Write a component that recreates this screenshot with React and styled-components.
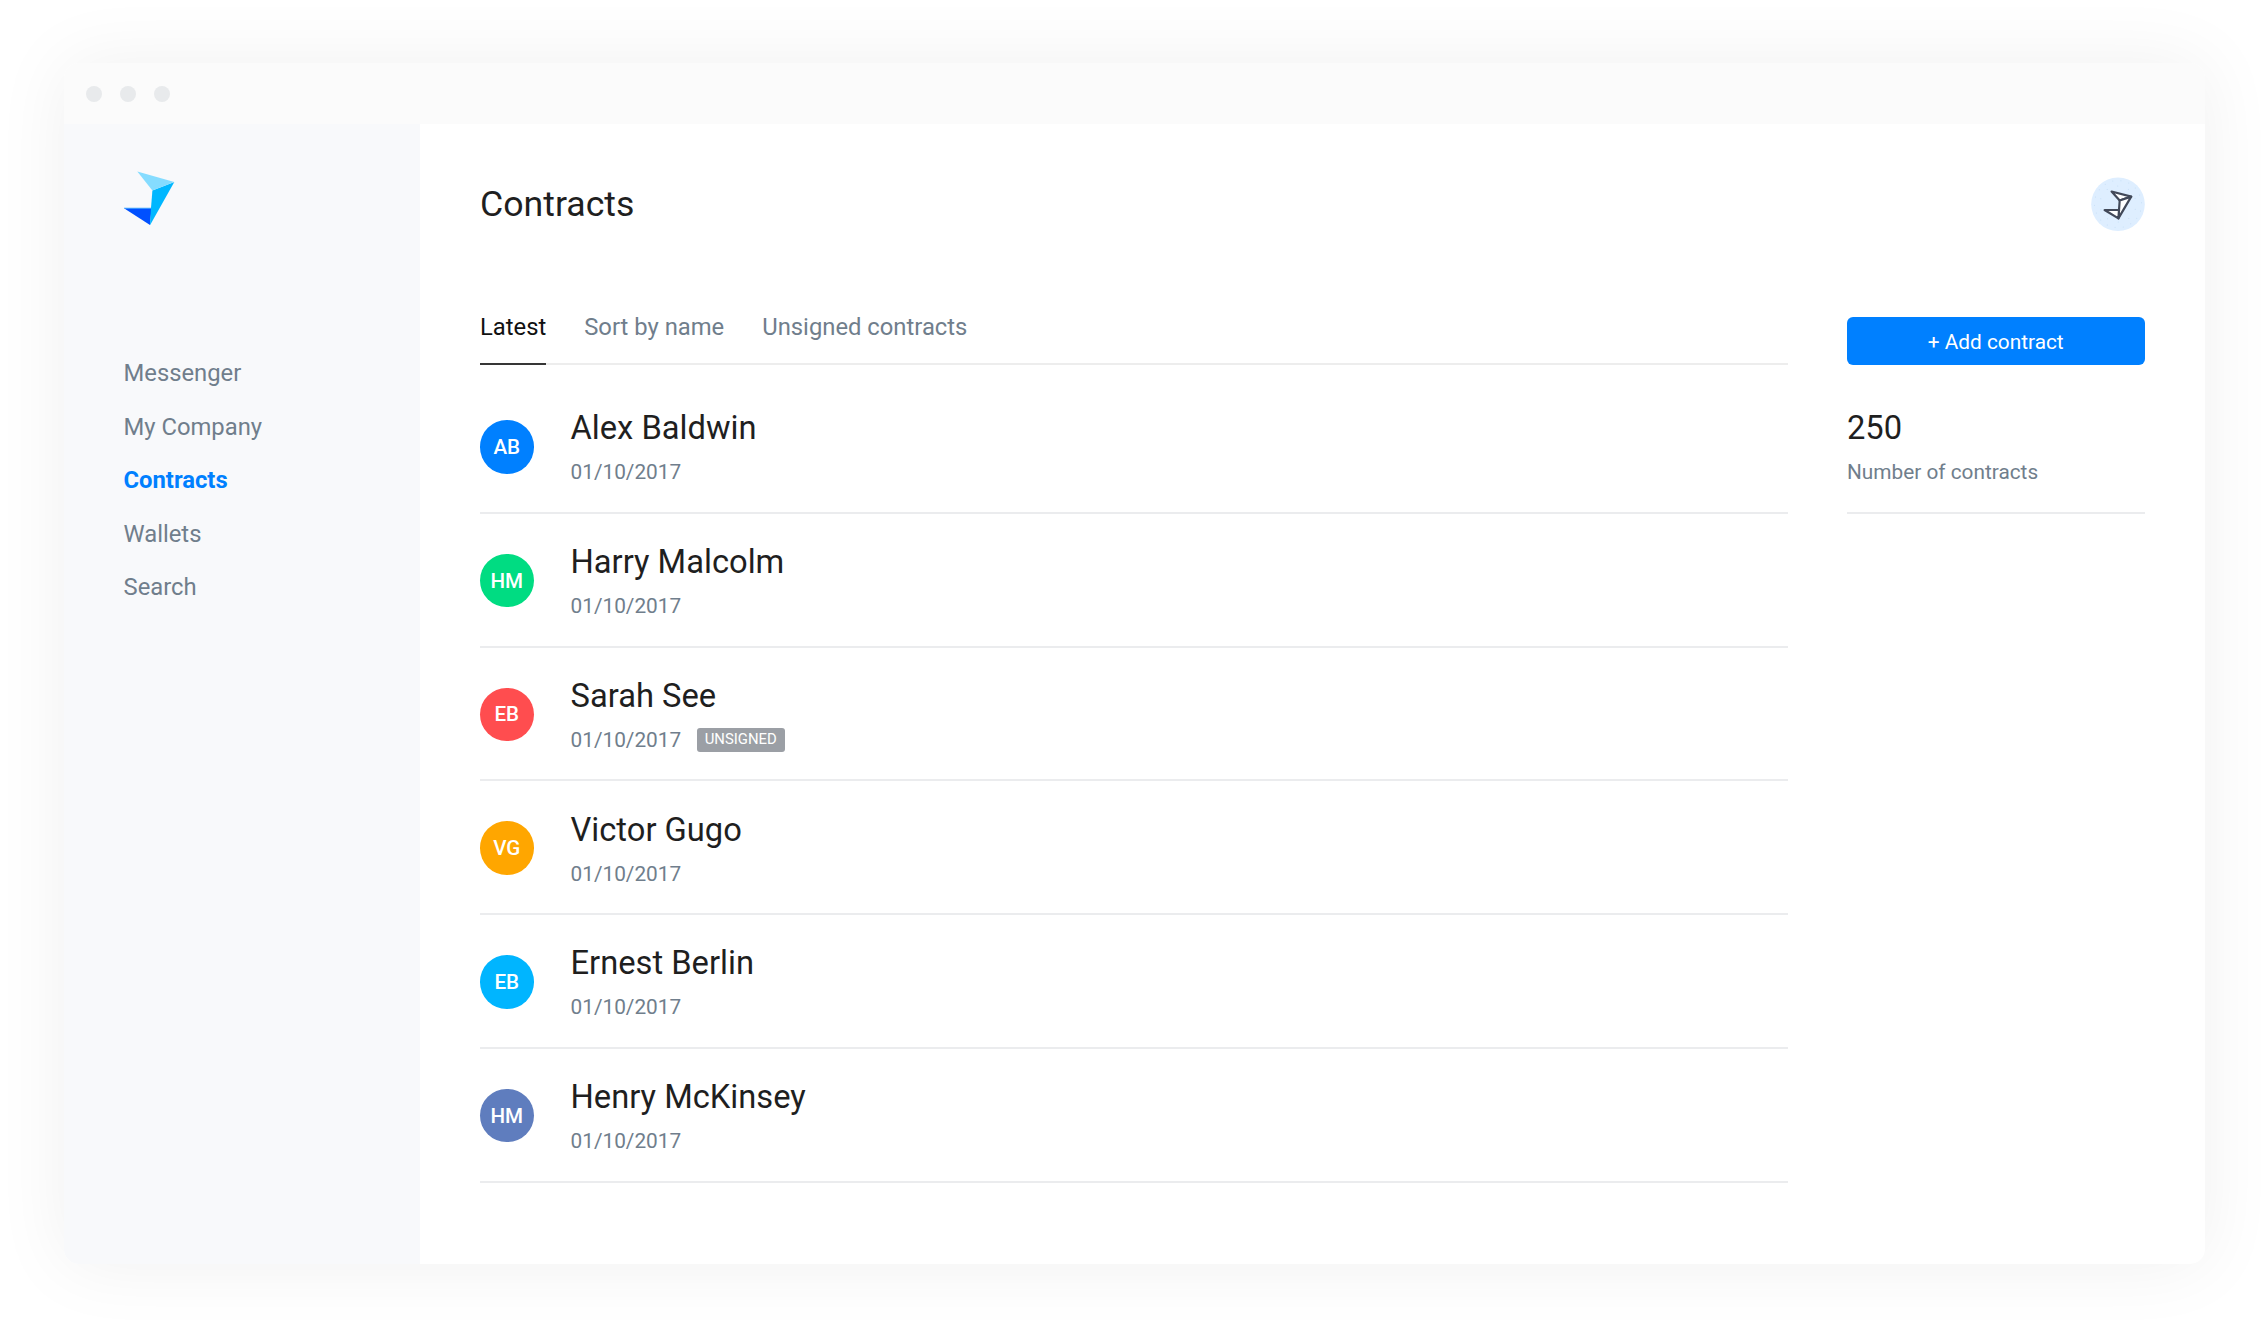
import React from "react";
import styled, { createGlobalStyle } from "styled-components";

const GlobalStyle = createGlobalStyle`
  *, *::before, *::after { box-sizing: border-box; }
  body {
    margin: 0;
    background: #ffffff;
    color: #1f1f1f;
    font-family: Roboto, "Liberation Sans", sans-serif;
    overflow: hidden;
  }
`;

const Stage = styled.div`
  height: 1328px;
  padding: 63px 63.5px 64px 63.5px;
`;

const Window = styled.div`
  display: flex;
  flex-direction: column;
  height: 1201px;
  border-radius: 15px;
  overflow: hidden;
  background: #ffffff;
  box-shadow: 0 0 74px rgba(0, 0, 0, 0.063);
`;

const TitleBar = styled.div`
  display: flex;
  align-items: center;
  gap: 18px;
  flex: 0 0 61px;
  padding-left: 22.5px;
  background: #fbfbfb;
`;

const WindowDot = styled.span`
  width: 16px;
  height: 16px;
  border-radius: 50%;
  background: #e8eaec;
`;

const Body = styled.div`
  display: flex;
  flex: 1;
`;

const Sidebar = styled.aside`
  flex: 0 0 356.5px;
  padding: 47px 0 0 60px;
  background: #f8f9fb;
`;

const Logo = styled.svg`
  display: block;
  width: 52px;
  height: 56px;
  margin-bottom: 120.3px;
`;

const Nav = styled.nav`
  display: flex;
  flex-direction: column;
  align-items: flex-start;
`;

const NavItem = styled.a`
  height: 53.5px;
  line-height: 53.5px;
  font-size: 23.8px;
  font-weight: ${(p) => (p.$active ? 700 : 400)};
  color: ${(p) => (p.$active ? "#0080ff" : "#707e8c")};
`;

const Main = styled.main`
  flex: 1;
  padding: 53px 60px 0;
`;

const Header = styled.header`
  display: flex;
  align-items: center;
  justify-content: space-between;
  height: 54px;
  margin-bottom: 86px;
`;

const Title = styled.h1`
  margin: 0;
  font-size: 35.67px;
  line-height: 54px;
  font-weight: 400;
`;

const Columns = styled.div`
  display: grid;
  grid-template-columns: 1308px 297.5px;
  justify-content: space-between;
`;

const Tabs = styled.div`
  display: flex;
  align-items: flex-start;
  gap: 38px;
  height: 71px;
  margin-top: -23px;
  box-shadow: inset 0 -2px 0 #ededed;
`;

const Tab = styled.a`
  height: 71px;
  line-height: 67px;
  font-size: 23.8px;
  color: ${(p) => (p.$active ? "#111111" : "#707e8c")};
  box-shadow: ${(p) => (p.$active ? "inset 0 -2px 0 #363636" : "none")};
`;

const List = styled.div`
  padding-top: 15px;
`;

const Row = styled.div`
  display: flex;
  align-items: center;
  gap: 37px;
  height: 133.78px;
  padding-top: 2px;
  border-bottom: 2px solid #ebecee;
`;

const Initials = styled.div`
  display: flex;
  align-items: center;
  justify-content: center;
  width: 53.5px;
  height: 53.5px;
  border-radius: 50%;
  background: ${(p) => p.$color};
  color: #ffffff;
  font-size: 20.6px;
  font-weight: 500;
`;

const Details = styled.div`
  padding-top: 7px;
`;

const Name = styled.div`
  font-size: 32.7px;
  line-height: 44px;
  color: #1f1f1f;
`;

const Meta = styled.div`
  display: flex;
  align-items: center;
  gap: 15.5px;
  height: 44px;
  line-height: 44px;
  font-size: 20.8px;
  color: #707e8c;
`;

const Badge = styled.span`
  height: 24px;
  padding: 0 8px;
  border-radius: 3px;
  background: #9b9fa5;
  color: #ffffff;
  font-size: 14.87px;
  line-height: 23px;
`;

const Side = styled.aside`
  display: flex;
  flex-direction: column;
`;

const AddButton = styled.button`
  height: 48px;
  border: 0;
  border-radius: 6px;
  background: #0080ff;
  color: #ffffff;
  font: 400 20.8px/46px Roboto, "Liberation Sans", sans-serif;
  padding: 2px 0 0;
`;

const Stat = styled(Row)`
  margin-top: 15px;
`;

const Profile = styled.svg`
  display: block;
  width: 54px;
  height: 54px;
`;

const navItems = ["Messenger", "My Company", "Contracts", "Wallets", "Search"];

const contracts = [
  { initials: "AB", name: "Alex Baldwin", color: "#0080ff" },
  { initials: "HM", name: "Harry Malcolm", color: "#00dc82" },
  { initials: "EB", name: "Sarah See", color: "#ff4d4f", unsigned: true },
  { initials: "VG", name: "Victor Gugo", color: "#ffa600" },
  { initials: "EB", name: "Ernest Berlin", color: "#00b5ff" },
  { initials: "HM", name: "Henry McKinsey", color: "#5f7dbe" },
];

function BrandLogo() {
  return (
    <Logo viewBox="0 0 52 56">
      <path d="M0 37.2H27.5L26 54Z" fill="#0050ff" />
      <path d="M0 37.2H27.5" stroke="#35a8ff" strokeWidth="0.8" />
      <path d="M50.3 11L28.4 19.5L27 37L26 54.3Z" fill="#00b7ff" />
      <path d="M13.3 0.6L50.3 11L28.4 19.6Z" fill="#85dcff" />
    </Logo>
  );
}

function ProfileIcon() {
  const dots = [];
  [[18, 10], [23.5, 18]].forEach(([radius, count]) => {
    for (let i = 0; i < count; i += 1) {
      const angle = (i / count) * Math.PI * 2 + 0.3;
      dots.push(
        <circle
          key={`${radius}-${i}`}
          cx={27 + radius * Math.cos(angle)}
          cy={27 + radius * Math.sin(angle)}
          r="0.5"
        />
      );
    }
  });
  return (
    <Profile viewBox="0 0 54 54">
      <circle cx="27" cy="27.2" r="26.8" fill="#deeeff" />
      <g fill="#c3dcf3">{dots}</g>
      <g fill="#ffffff" stroke="#424959" strokeWidth="2.2" strokeLinejoin="round">
        <path d="M20.6 14.5L40.2 19.6L28.7 23.5Z" />
        <path d="M40.2 19.6L28.7 23.5L27.4 41.4Z" />
        <path d="M13.6 33H28L27.4 41.4Z" />
      </g>
    </Profile>
  );
}

export default function App() {
  return (
    <>
      <GlobalStyle />
      <Stage>
        <Window>
          <TitleBar>
            <WindowDot />
            <WindowDot />
            <WindowDot />
          </TitleBar>
          <Body>
            <Sidebar>
              <BrandLogo />
              <Nav>
                {navItems.map((item) => (
                  <NavItem key={item} $active={item === "Contracts"}>
                    {item}
                  </NavItem>
                ))}
              </Nav>
            </Sidebar>
            <Main>
              <Header>
                <Title>Contracts</Title>
                <ProfileIcon />
              </Header>
              <Columns>
                <section>
                  <Tabs>
                    <Tab $active>Latest</Tab>
                    <Tab>Sort by name</Tab>
                    <Tab>Unsigned contracts</Tab>
                  </Tabs>
                  <List>
                    {contracts.map((c) => (
                      <Row key={c.name}>
                        <Initials $color={c.color}>{c.initials}</Initials>
                        <Details>
                          <Name>{c.name}</Name>
                          <Meta>
                            01/10/2017
                            {c.unsigned && <Badge>UNSIGNED</Badge>}
                          </Meta>
                        </Details>
                      </Row>
                    ))}
                  </List>
                </section>
                <Side>
                  <AddButton>+ Add contract</AddButton>
                  <Stat>
                    <Details>
                      <Name>250</Name>
                      <Meta>Number of contracts</Meta>
                    </Details>
                  </Stat>
                </Side>
              </Columns>
            </Main>
          </Body>
        </Window>
      </Stage>
    </>
  );
}
